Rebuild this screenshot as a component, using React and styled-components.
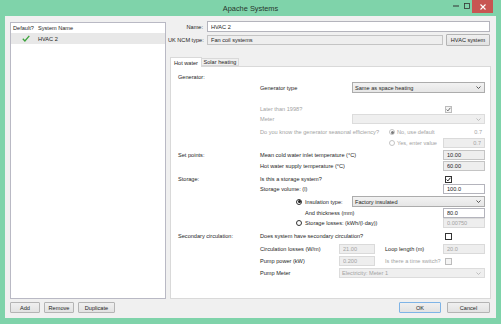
import React from "react";
import styled, { createGlobalStyle } from "styled-components";

const GlobalStyle = createGlobalStyle`
  html, body {
    margin: 0;
    padding: 0;
    background: #7fd3aa;
  }
  body {
    font-family: "Liberation Sans", Arial, sans-serif;
  }
  * {
    box-sizing: border-box;
  }
`;

const Window = styled.div`
  width: 501px;
  height: 324px;
  background: #7fd3aa;
  display: flex;
  flex-direction: column;
  padding: 0 5px 6px 5px;
  font-size: 5.6px;
  color: #1e1e1e;
`;

const TitleBar = styled.div`
  height: 16px;
  display: grid;
  grid-template-columns: 1fr auto 1fr;
  align-items: center;
`;

const Title = styled.div`
  grid-column: 2;
  font-size: 7.4px;
  color: #27352d;
`;

const Controls = styled.div`
  grid-column: 3;
  justify-self: end;
  align-self: start;
  display: flex;
  align-items: flex-start;
  height: 14px;
  padding-right: 3px;
`;

const CtrlBtn = styled.div`
  width: ${(p) => p.$w}px;
  height: ${(p) => (p.$close ? 13 : 12)}px;
  display: flex;
  align-items: center;
  justify-content: center;
  background: ${(p) => (p.$close ? "#c85552" : "transparent")};
`;

const Client = styled.div`
  flex: 1;
  display: flex;
  background: #f0f0f0;
  padding: 5px 5px 5px 5px;
`;

const LeftCol = styled.div`
  width: 156px;
  display: flex;
  flex-direction: column;
  padding-top: 1px;
`;

const List = styled.div`
  flex: 1;
  background: #fff;
  border: 1px solid #b9b9c4;
`;

const ListRow = styled.div`
  height: ${(p) => (p.$header ? 10 : 11)}px;
  display: flex;
  align-items: center;
  background: ${(p) => (p.$selected ? "#e8e8e8" : "transparent")};
`;

const ListCell = styled.div`
  width: ${(p) => (p.$w ? `${p.$w}px` : "auto")};
  padding-left: ${(p) => p.$pl || 0}px;
  display: flex;
  align-items: center;
`;

const ButtonRow = styled.div`
  display: flex;
  gap: ${(p) => p.$gap}px;
  margin-top: 3px;
  height: 11px;
  justify-content: ${(p) => (p.$end ? "flex-end" : "flex-start")};
  padding-right: ${(p) => (p.$end ? 1 : 0)}px;
`;

const Button = styled.button`
  width: ${(p) => p.$w}px;
  height: 100%;
  font: inherit;
  font-size: 5.6px;
  color: #1e1e1e;
  padding: 0;
  background: linear-gradient(#f0f0f0, #e2e2e2);
  border: 1px solid ${(p) => (p.$default ? "#7fb4e6" : "#b4b4b4")};
  border-radius: 1px;
`;

const RightCol = styled.div`
  flex: 1;
  margin-left: 2px;
  display: flex;
  flex-direction: column;
`;

const TopRow = styled.div`
  display: flex;
  align-items: center;
  height: ${(p) => p.$h}px;
  margin-top: ${(p) => p.$mt || 0}px;
  padding-right: 1px;
`;

const TopLabel = styled.div`
  width: 35px;
  text-align: right;
  margin-right: 4px;
  white-space: nowrap;
`;

const Tabs = styled.div`
  display: flex;
  align-items: flex-end;
  height: 9px;
  margin-top: 11px;
  padding-left: 2px;
  position: relative;
  z-index: 1;
`;

const Tab = styled.div`
  width: ${(p) => p.$w}px;
  height: ${(p) => (p.$active ? 10 : 8)}px;
  margin-bottom: ${(p) => (p.$active ? -1 : 0)}px;
  display: flex;
  align-items: center;
  justify-content: center;
  background: ${(p) => (p.$active ? "#fff" : "#f0f0f0")};
  border: 1px solid #d9d9d9;
  border-bottom: ${(p) => (p.$active ? "none" : "1px solid #d9d9d9")};
  margin-left: ${(p) => (p.$active ? 0 : -1)}px;
`;

const Panel = styled.div`
  flex: 1;
  margin-left: 2px;
  background: #fff;
  border: 1px solid #d9d9d9;
  padding: 5px 5px 0 7px;
`;

const Section = styled.div`
  display: grid;
  grid-template-columns: 82px 1fr;
  margin-top: ${(p) => p.$mt || 0}px;
`;

const SectionLabel = styled.div`
  height: 10px;
  line-height: 10px;
  white-space: nowrap;
`;

const SectionBody = styled.div`
  display: flex;
  flex-direction: column;
  padding-top: ${(p) => p.$pt || 0}px;
`;

const Row = styled.div`
  display: flex;
  align-items: center;
  height: ${(p) => p.$h || 10}px;
  margin-top: ${(p) => p.$mt || 0}px;
`;

const Text = styled.span`
  color: ${(p) => (p.$dim ? "#a3a3a3" : "#1e1e1e")};
  white-space: nowrap;
  flex: ${(p) => (p.$grow ? 1 : "none")};
  width: ${(p) => (p.$w ? `${p.$w}px` : "auto")};
  padding-left: ${(p) => p.$pl || 0}px;
  text-align: ${(p) => p.$align || "left"};
`;

const Spacer = styled.div`
  width: ${(p) => p.$w}px;
  flex: none;
`;

const Field = styled.input`
  width: ${(p) => (p.$w ? `${p.$w}px` : "100%")};
  flex: ${(p) => (p.$w ? "none" : 1)};
  height: ${(p) => p.$h || 10}px;
  font: inherit;
  font-size: 5.6px;
  padding: 0 3px;
  text-align: ${(p) => p.$align || "left"};
  outline: none;
  color: ${(p) => (p.$variant === "disabled" ? "#a3a3a3" : "#1e1e1e")};
  background: ${(p) => (p.$variant === "white" ? "#fff" : "#eeeeee")};
  border: 1px solid
    ${(p) =>
      p.$variant === "white"
        ? "#b4b4bc"
        : p.$variant === "disabled"
        ? "#dadada"
        : "#c4c4c4"};
`;

const SelectBox = styled.div`
  width: ${(p) => (p.$w ? `${p.$w}px` : "auto")};
  flex: ${(p) => (p.$w ? "none" : 1)};
  height: ${(p) => p.$h || 10}px;
  display: flex;
  align-items: center;
  justify-content: space-between;
  padding: 0 3px 0 2px;
  color: ${(p) => (p.$disabled ? "#a3a3a3" : "#1e1e1e")};
  background: ${(p) =>
    p.$disabled ? "#efefef" : "linear-gradient(#f2f2f2, #e6e6e6)"};
  border: 1px solid ${(p) => (p.$disabled ? "#dcdcdc" : "#acacac")};
`;

const CheckCell = styled.div`
  width: 42px;
  flex: none;
  display: flex;
  align-items: center;
  padding-left: 2px;
`;

const Box = styled.div`
  width: 7px;
  height: 7px;
  border: 1px solid ${(p) => (p.$disabled ? "#bcbcbc" : "#333")};
  background: ${(p) => (p.$disabled ? "#f4f4f4" : "#fff")};
  display: flex;
  align-items: center;
  justify-content: center;
`;

const RadioDot = styled.div`
  width: 6px;
  height: 6px;
  flex: none;
  margin-right: ${(p) => p.$mr || 3}px;
  border-radius: 50%;
  border: 1px solid ${(p) => (p.$disabled ? "#c4c4c4" : "#333")};
  background: #fff;
  display: flex;
  align-items: center;
  justify-content: center;
  &::after {
    content: "";
    width: 3px;
    height: 3px;
    border-radius: 50%;
    background: ${(p) =>
      p.$on ? (p.$disabled ? "#7a7a7a" : "#1e1e1e") : "transparent"};
  }
`;

const Split = styled.div`
  display: grid;
  grid-template-columns: 79px 36px 1fr 42px;
  align-items: center;
  height: 10px;
  margin-top: ${(p) => p.$mt || 0}px;
`;

function Chevron({ color = "#444" }) {
  return (
    <svg width="5" height="3" viewBox="0 0 5 3">
      <path d="M0.5 0.5 L2.5 2.5 L4.5 0.5" stroke={color} strokeWidth="0.9" fill="none" />
    </svg>
  );
}

function Select({ children, w, h, disabled }) {
  return (
    <SelectBox $w={w} $h={h} $disabled={disabled}>
      <span>{children}</span>
      <Chevron color={disabled ? "#b8b8b8" : "#444"} />
    </SelectBox>
  );
}

function Check({ on, disabled }) {
  return (
    <CheckCell>
      <Box $disabled={disabled}>
        {on && (
          <svg width="5" height="5" viewBox="0 0 5 5">
            <path
              d="M0.6 2.6 L1.9 3.9 L4.4 0.8"
              stroke={disabled ? "#6b6b6b" : "#1e1e1e"}
              strokeWidth="1"
              fill="none"
            />
          </svg>
        )}
      </Box>
    </CheckCell>
  );
}

function GreenTick() {
  return (
    <svg width="8" height="7" viewBox="0 0 8 7">
      <path d="M0.8 3.8 L2.9 6 L7.3 0.8" stroke="#3aa23a" strokeWidth="1.3" fill="none" />
    </svg>
  );
}

export default function App() {
  return (
    <>
      <GlobalStyle />
      <Window>
        <TitleBar>
          <Title>Apache Systems</Title>
          <Controls>
            <CtrlBtn $w={12}>
              <svg width="6" height="2" viewBox="0 0 6 2">
                <rect x="0" y="0.5" width="6" height="1" fill="#333" />
              </svg>
            </CtrlBtn>
            <CtrlBtn $w={10}>
              <svg width="6" height="6" viewBox="0 0 6 6">
                <rect x="0.5" y="0.5" width="5" height="5" stroke="#333" strokeWidth="0.8" fill="none" />
              </svg>
            </CtrlBtn>
            <CtrlBtn $w={21} $close>
              <svg width="6" height="6" viewBox="0 0 6 6">
                <path d="M0.5 0.5 L5.5 5.5 M5.5 0.5 L0.5 5.5" stroke="#fff" strokeWidth="1.1" />
              </svg>
            </CtrlBtn>
          </Controls>
        </TitleBar>

        <Client>
          <LeftCol>
            <List>
              <ListRow $header>
                <ListCell $w={27} $pl={2}>Default?</ListCell>
                <ListCell>System Name</ListCell>
              </ListRow>
              <ListRow $selected>
                <ListCell $w={27} $pl={11}>
                  <GreenTick />
                </ListCell>
                <ListCell>HVAC 2</ListCell>
              </ListRow>
            </List>
            <ButtonRow $gap={4}>
              <Button $w={30}>Add</Button>
              <Button $w={30}>Remove</Button>
              <Button $w={37}>Duplicate</Button>
            </ButtonRow>
          </LeftCol>

          <RightCol>
            <TopRow $h={11}>
              <TopLabel>Name:</TopLabel>
              <Field $variant="white" $h={11} defaultValue="HVAC 2" />
            </TopRow>
            <TopRow $h={12} $mt={2}>
              <TopLabel>UK NCM type:</TopLabel>
              <Field $variant="readonly" $h={10} defaultValue="Fan coil systems" readOnly />
              <Spacer $w={3} />
              <Button $w={44}>HVAC system</Button>
            </TopRow>

            <Tabs>
              <Tab $w={32} $active>Hot water</Tab>
              <Tab $w={38}>Solar heating</Tab>
            </Tabs>

            <Panel>
              <Section>
                <SectionLabel>Generator:</SectionLabel>
                <SectionBody $pt={10}>
                  <Row $h={11}>
                    <Text $grow>Generator type</Text>
                    <Select w={133} h={11}>Same as space heating</Select>
                  </Row>
                  <Row $mt={11}>
                    <Text $grow $dim>Later than 1998?</Text>
                    <Check on disabled />
                  </Row>
                  <Row>
                    <Text $grow $dim>Meter</Text>
                    <Select w={133} disabled />
                  </Row>
                  <Row $mt={3}>
                    <Text $w={129} $dim>Do you know the generator seasonal efficiency?</Text>
                    <RadioDot $on $disabled $mr={2} />
                    <Text $grow $dim>No, use default</Text>
                    <Text $w={42} $dim $align="right" style={{ paddingRight: 3 }}>0.7</Text>
                  </Row>
                  <Row $mt={1}>
                    <Spacer $w={129} />
                    <RadioDot $disabled $mr={2} />
                    <Text $grow $dim>Yes, enter value</Text>
                    <Field $w={42} $variant="disabled" $align="right" defaultValue="0.7" readOnly />
                  </Row>
                </SectionBody>
              </Section>

              <Section $mt={2}>
                <SectionLabel>Set points:</SectionLabel>
                <SectionBody>
                  <Row>
                    <Text $grow>Mean cold water inlet temperature (°C)</Text>
                    <Field $w={42} $variant="readonly" defaultValue="10.00" readOnly />
                  </Row>
                  <Row $mt={1}>
                    <Text $grow>Hot water supply temperature (°C)</Text>
                    <Field $w={42} $variant="readonly" defaultValue="60.00" readOnly />
                  </Row>
                </SectionBody>
              </Section>

              <Section $mt={3}>
                <SectionLabel>Storage:</SectionLabel>
                <SectionBody>
                  <Row>
                    <Text $grow>Is this a storage system?</Text>
                    <Check on />
                  </Row>
                  <Row>
                    <Text $grow>Storage volume: (l)</Text>
                    <Field $w={42} $variant="white" defaultValue="100.0" />
                  </Row>
                  <Row $h={11} $mt={2}>
                    <Spacer $w={36} />
                    <RadioDot $on />
                    <Text $grow>Insulation type:</Text>
                    <Select w={133} h={11}>Factory insulated</Select>
                  </Row>
                  <Row $mt={1}>
                    <Spacer $w={45} />
                    <Text $grow>And thickness (mm)</Text>
                    <Field $w={42} $variant="white" defaultValue="80.0" />
                  </Row>
                  <Row>
                    <Spacer $w={36} />
                    <RadioDot />
                    <Text $grow>Storage losses: (kWh/(l·day))</Text>
                    <Field $w={42} $variant="disabled" defaultValue="0.00750" readOnly />
                  </Row>
                </SectionBody>
              </Section>

              <Section $mt={3}>
                <SectionLabel>Secondary circulation:</SectionLabel>
                <SectionBody>
                  <Row>
                    <Text $grow>Does system have secondary circulation?</Text>
                    <Check />
                  </Row>
                  <Split $mt={3}>
                    <Text>Circulation losses (W/m)</Text>
                    <Field $variant="disabled" defaultValue="21.00" readOnly />
                    <Text $pl={10}>Loop length (m)</Text>
                    <Field $variant="disabled" defaultValue="20.0" readOnly />
                  </Split>
                  <Split $mt={2}>
                    <Text>Pump power (kW)</Text>
                    <Field $variant="disabled" defaultValue="0.200" readOnly />
                    <Text $pl={10} $dim>Is there a time switch?</Text>
                    <Check disabled />
                  </Split>
                  <Row $mt={2}>
                    <Text $w={79}>Pump Meter</Text>
                    <Select disabled>Electricity: Meter 1</Select>
                  </Row>
                </SectionBody>
              </Section>
            </Panel>

            <ButtonRow $gap={6} $end>
              <Button $w={42} $default>OK</Button>
              <Button $w={43}>Cancel</Button>
            </ButtonRow>
          </RightCol>
        </Client>
      </Window>
    </>
  );
}
